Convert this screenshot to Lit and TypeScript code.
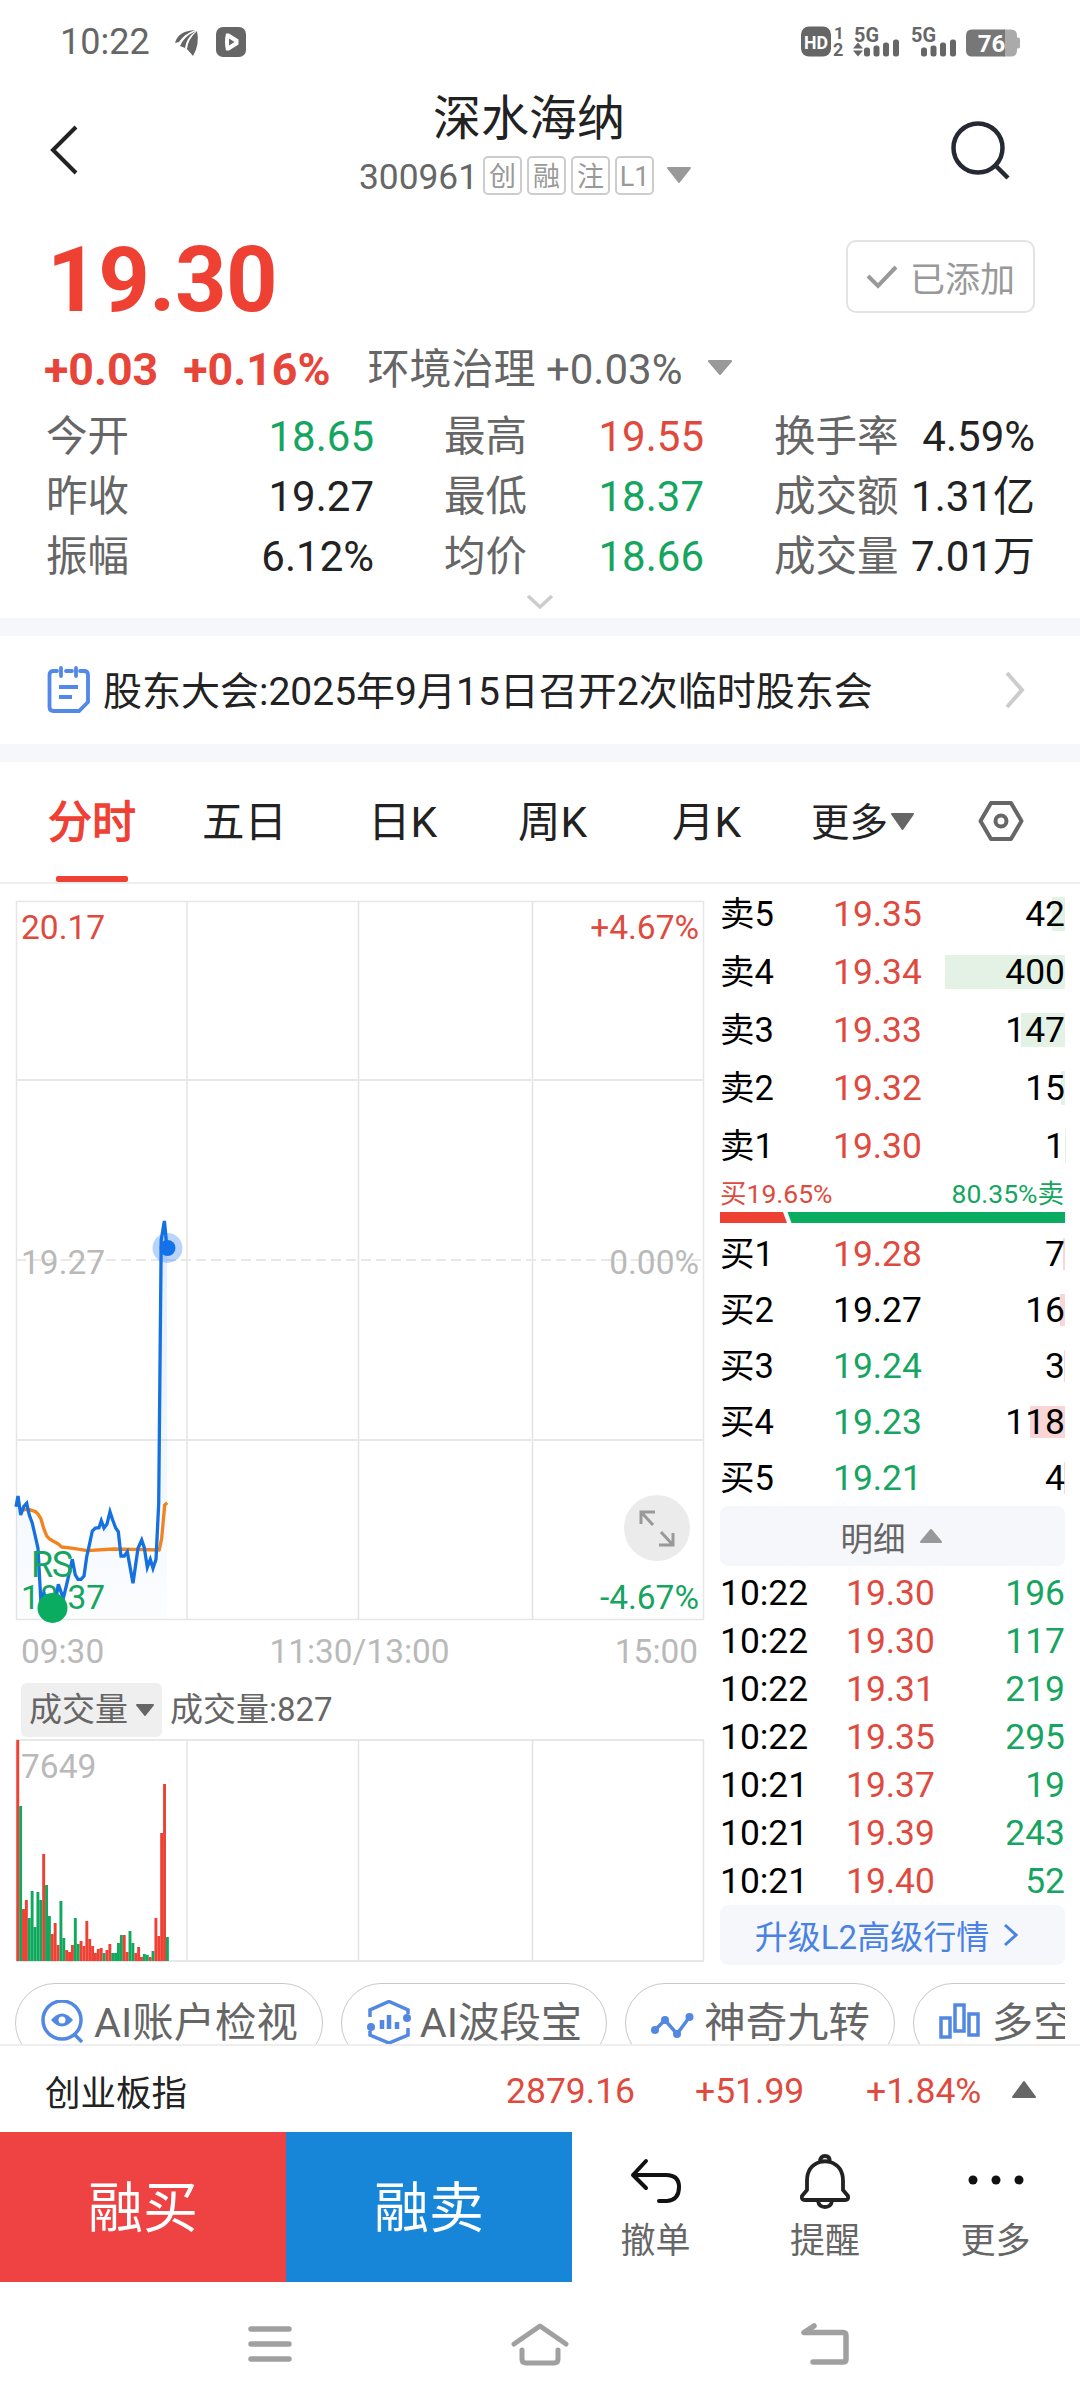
import { LitElement, html, svg, css } from "lit";
import { customElement } from "lit/decorators.js";

type Tone = "up" | "down" | "flat";

interface Stat { label: string; value: string; tone: Tone; }
interface Level { label: string; price: string; volume: number; tone: Tone; }

const STATS: Stat[] = [
  { label: "今开", value: "18.65", tone: "down" },
  { label: "最高", value: "19.55", tone: "up" },
  { label: "换手率", value: "4.59%", tone: "flat" },
  { label: "昨收", value: "19.27", tone: "flat" },
  { label: "最低", value: "18.37", tone: "down" },
  { label: "成交额", value: "1.31亿", tone: "flat" },
  { label: "振幅", value: "6.12%", tone: "flat" },
  { label: "均价", value: "18.66", tone: "down" },
  { label: "成交量", value: "7.01万", tone: "flat" },
];

const SELLS: Level[] = [
  { label: "卖5", price: "19.35", volume: 42, tone: "up" },
  { label: "卖4", price: "19.34", volume: 400, tone: "up" },
  { label: "卖3", price: "19.33", volume: 147, tone: "up" },
  { label: "卖2", price: "19.32", volume: 15, tone: "up" },
  { label: "卖1", price: "19.30", volume: 1, tone: "up" },
];

const BUYS: Level[] = [
  { label: "买1", price: "19.28", volume: 7, tone: "up" },
  { label: "买2", price: "19.27", volume: 16, tone: "flat" },
  { label: "买3", price: "19.24", volume: 3, tone: "down" },
  { label: "买4", price: "19.23", volume: 118, tone: "down" },
  { label: "买5", price: "19.21", volume: 4, tone: "down" },
];

const TRADES: [string, string, string][] = [
  ["10:22", "19.30", "196"],
  ["10:22", "19.30", "117"],
  ["10:22", "19.31", "219"],
  ["10:22", "19.35", "295"],
  ["10:21", "19.37", "19"],
  ["10:21", "19.39", "243"],
  ["10:21", "19.40", "52"],
];

// Price and average lines, in chart pixels.
const PRICE =
  "0,605.7 2,595 4.7,614 7.7,605.7 10.7,602.3 13.3,614 16.3,622.3 19,634 22,647.3 24.7,697.3 27.7,692.3 30.7,705.7 36.3,709 39.3,702 42.3,683.3 47.3,697.3 51.7,679 56.3,658.3 59.3,674 62,678.3 65,678.3 68,675 70.7,655.7 73.7,642.3 76.3,630 79.3,627 83,626.7 85.3,619.7 88,627 91,623 94,610.7 96.7,619 99.7,627 102.3,630.7 105,655 108.3,655 111.3,650.7 117,682.3 122,647.3 125.7,639 128.3,646.7 131.3,666.3 134.3,658.3 137,667.3 140,658.3 142.7,602.3 143.3,539 145.2,339 148.4,320 151,347";
const AVERAGE =
  "4.7,609 12.3,608.3 19,610.3 22,613 24.7,617.3 27.7,627.3 30.7,635 34,638.3 42.3,643 45.7,646 57.3,647.3 71.3,649.7 97.3,648 117,648.3 143.3,649 145.7,637.3 148.7,604 151.3,601.7";

// One bar a minute: height in pixels, sign gives the direction.
const VOLUMES = [
  221, -155, 52, 61, -43, -70, -34, -69, -61, 107, -76, -45, 27, 38, 16, -60, -23, 11, 9, 16, -43, -17,
  20, 15, 40, 22, 15, 8, 12, 13, -8, 11, 17, -8, -8, -18, -26, 26, 9, -30, -18, 8, 14, 4, -7, -6, 4, -10,
  43, 25, 128, 177, -24,
];

const GRID_X = [0.5, 171, 342.5, 516.5, 687.5];

@customElement("app-root")
export class AppRoot extends LitElement {
  static styles = css`
    :host { display: block; }
    * { box-sizing: border-box; }
    svg { display: block; flex: none; }
    .page {
      width: 1080px; height: 2408px; overflow: hidden; background: #fff; color: #222;
      font-family: Roboto, "Noto Sans CJK SC", sans-serif;
      display: flex; flex-direction: column; white-space: nowrap;
    }
    .page > * { flex: none; }
    .up { color: #e04a3e; }
    .down { color: #16a560; }
    .flat { color: #222; }

    .status { height: 82px; padding: 1px 50px 0 60px; display: flex; align-items: center; color: #666; font-size: 36px; }
    .status-left { display: flex; align-items: center; flex: 1; gap: 25px; }
    .status-left svg { margin-top: 1px; }

    .header { height: 143px; display: grid; grid-template-columns: 359px 340px 1fr; }
    .back { padding: 42px 0 0 49px; }
    .search { padding: 39px 0 0 249px; }
    .name { text-align: center; font-size: 48px; line-height: 60px; margin-top: 7px; }
    .code { display: flex; align-items: center; font-size: 35.3px; line-height: 38px; color: #666; margin-top: 5px; }
    .code-num { margin-right: 5px; padding-top: 4px; }
    .tag {
      width: 39px; height: 39px; border: 2px solid #ccc; border-radius: 5px; margin-right: 5px;
      font-size: 27px; line-height: 38px; text-align: center; color: #999;
    }
    .code svg { margin-left: 8px; }

    .price-row { height: 110px; padding: 0 45px 0 47px; display: flex; align-items: center; justify-content: space-between; }
    .price { font-size: 90px; font-weight: 700; line-height: 100px; padding-top: 2px; color: #ef4034; letter-spacing: -0.5px; }
    .added {
      width: 189px; height: 73px; border: 2px solid #e3e3e3; border-radius: 10px; margin-bottom: 7px;
      display: flex; align-items: center; justify-content: center; gap: 12px; font-size: 35px; color: #999;
    }
    .change-row { height: 70px; padding-left: 44px; display: flex; align-items: center; line-height: 60px; }
    .change { font-size: 44.7px; font-weight: 700; color: #e8453a; margin-right: 25px; }
    .sector { font-size: 42px; color: #666; margin-left: 12px; }
    .change-row svg { margin: 0 0 5px 26px; }

    .stats { padding: 0 45px 0 46px; display: grid; grid-template-columns: 328px 260px 261px; column-gap: 70px; grid-auto-rows: 60px; }
    .stat { display: flex; justify-content: space-between; font-size: 42px; line-height: 63px; }
    .stat-label { color: #666; font-size: 41.5px; }
    .expand { height: 33px; display: flex; align-items: center; justify-content: center; }
    .band { height: 18px; background: #f6f7fa; }

    .notice { height: 108px; padding: 0 55px 0 46px; display: flex; align-items: center; font-size: 39px; }
    .notice-text { margin: 0 auto 0 11px; line-height: 60px; padding-top: 4px; }

    .tabs {
      height: 122px; border-bottom: 2px solid #eee; padding-left: 48px; font-size: 42.5px; line-height: 122px;
      display: grid; grid-template-columns: 154px 166px 150px 154px 139px 167px 46px;
    }
    .tab.active { color: #ef4034; -webkit-text-stroke: 1.3px #ef4034; font-size: 44px; width: 88px; display: flex; flex-direction: column; align-items: center; }
    .underline { width: 72px; height: 6px; border-radius: 2px; background: #ef4034; margin-top: -8px; }
    .more { font-size: 38.5px; display: flex; gap: 3px; }
    .more svg { margin-top: 51px; }
    .gear { padding-top: 38px; }

    .market { height: 1099px; padding: 0 15px 0 16px; display: grid; grid-template-columns: 688px 345px; column-gap: 16px; }
    .chart { display: flex; flex-direction: column; padding-top: 17px; }
    .chart svg { overflow: visible; }
    .times { height: 63px; display: grid; grid-template-columns: 1fr auto 1fr; padding: 0 6px 0 5px; font-size: 33.4px; line-height: 64px; color: #b9b9b9; }
    .volume-head { height: 54px; margin-bottom: 3px; padding-left: 5px; display: flex; align-items: center; font-size: 33px; line-height: 56px; color: #666; }
    .picker { width: 141px; height: 54px; background: #efefef; border-radius: 6px; padding-left: 8px; display: flex; align-items: center; gap: 8px; margin-right: 8px; }

    .book { display: flex; flex-direction: column; color: #000; font-size: 35.4px; }
    .level { display: grid; grid-template-columns: 113px 1fr 120px; align-items: center; line-height: 60px; height: 58px; }
    .level.buy { height: 56px; line-height: 58px; }
    .level .flat { color: #000; }
    .level-label { font-size: 34.5px; }
    .volume { display: grid; align-items: center; justify-items: end; }
    .volume > * { grid-area: 1 / 1; }
    .depth { height: 34px; background: #e3f2e5; }
    .buy .depth { height: 32px; background: #fad5d5; }
    .ratio { height: 37px; font-size: 26.5px; line-height: 39px; display: flex; justify-content: space-between; padding: 0 1px 0 0; }
    .ratio-bar { margin-bottom: 2px; }
    .detail-button {
      height: 60px; background: #f6f7fa; border-radius: 8px; display: flex; align-items: center; justify-content: center;
      font-size: 32.5px; color: #666; margin: 1px 0 2px; padding-right: 3px;
    }
    .detail-button svg { margin-left: 14px; }
    .trade { height: 48px; line-height: 50px; display: grid; grid-template-columns: 126px 1fr 100px; }
    .end { text-align: right; }
    .upgrade { color: #4a82e4; font-size: 33px; margin: 1px 0 0; padding-right: 11px; }

    .chips { height: 61px; margin: 0 15px; overflow: hidden; display: flex; gap: 18px; }
    .chip {
      flex: none; height: 80px; padding: 0 24px; border: 1px solid #c8c8c8; border-radius: 40px;
      display: flex; align-items: center; gap: 9px; font-size: 41.4px; line-height: 76px; color: #666;
    }

    .index {
      height: 88px; border-top: 2px solid #eee; padding: 0 44px 0 45px; display: grid; align-items: center;
      grid-template-columns: 461px 189px 171px 131px 39px; font-size: 35.5px;
    }
    .index span { padding-top: 3px; }
    .index svg { justify-self: end; }

    .actions { height: 150px; display: grid; grid-template-columns: 286px 286px 167px 172px 169px; }
    .trade-button { color: #fff; font-size: 55px; line-height: 153px; text-align: center; height: 150px; }
    .buy-button { background: #ef4242; }
    .sell-button { background: #1886d8; }
    .tool { display: flex; flex-direction: column; align-items: center; font-size: 35px; line-height: 44px; color: #666; padding-top: 20px; gap: 24px; }
    .tool svg { height: 44px; overflow: visible; }

    .nav { height: 126px; display: grid; grid-template-columns: 270px 270px 300px; padding: 0 0 3px 135px; justify-items: center; align-items: center; }
  `;

  private triangle(w: number, h: number, color: string, flip = false) {
    const d = flip ? `M${w / 2} 1 L${w - 1} ${h - 1} H1 Z` : `M1 1 H${w - 1} L${w / 2} ${h - 1} Z`;
    return html`<svg width=${w} height=${h}><path d=${d} fill=${color} stroke=${color} stroke-width="2" stroke-linejoin="round" /></svg>`;
  }

  private statusBar() {
    return html`<div class="status">
      <div class="status-left">
        <span>10:22</span>
        <svg width="72" height="32" viewBox="175 26 72 32">
          <path d="M195 30 Q178 31 175 43 L179 42 Q184 34 195 30Z M196 31 Q184 36 180 46 L185 48 Q186 38 196 31Z M197 31 Q188 39 187 49 L193 56 Q200 44 197 31Z" fill="#666" />
          <rect x="216" y="27" width="30" height="30" rx="7" fill="#666" />
          <path d="M226 33.5 H229 L238.5 39.5 V44.5 L229 50.5 H226 Q224 42 226 33.5Z" fill="#fff" />
          <path d="M229 38.5 L234.5 42 L229 45.5Z" fill="#666" />
        </svg>
      </div>
      <svg width="240" height="60" viewBox="790 12.500 240 60" fill="#666" font-family="Roboto, sans-serif" font-weight="700">
        <rect x="801" y="27" width="30" height="30" rx="8" />
        <text x="816" y="49" font-size="19" text-anchor="middle" fill="#fff" textLength="24" lengthAdjust="spacingAndGlyphs">HD</text>
        <text x="834" y="39" font-size="17">1</text>
        <text x="833" y="56" font-size="18">2</text>
        <text x="854" y="42" font-size="21" textLength="25" lengthAdjust="spacingAndGlyphs">5G</text>
        <path d="M853 49 L858 43 L863 49Z M853 51 L858 57 L863 51Z" />
        <rect x="864" y="48" width="6" height="9" rx="2.500" /><rect x="873.500" y="46" width="6" height="11" rx="2.500" />
        <rect x="883" y="43" width="6" height="14" rx="2.500" /><rect x="893" y="40" width="6" height="17" rx="2.500" />
        <text x="911" y="42" font-size="21" textLength="25" lengthAdjust="spacingAndGlyphs">5G</text>
        <rect x="921" y="48" width="6" height="9" rx="2.500" /><rect x="930.500" y="46" width="6" height="11" rx="2.500" />
        <rect x="940" y="43" width="6" height="14" rx="2.500" /><rect x="950" y="40" width="6" height="17" rx="2.500" />
        <path d="M1004 30 H1011 Q1017 30 1017 36 V38 H1018 Q1020 38 1020 40 V47 Q1020 49 1018 49 H1017 V51 Q1017 57 1011 57 H1004Z" fill="#aaa" />
        <path d="M972 30 H1005 V57 H972 Q966 57 966 51 V36 Q966 30 972 30Z" fill="#777" />
        <text x="991.500" y="52" font-size="24" text-anchor="middle" fill="#fff">76</text>
      </svg>
    </div>`;
  }

  private header() {
    return html`<div class="header">
      <div class="back">
        <svg width="32" height="52" viewBox="0 0 32 52"><path d="M27 3 L4 26 L27 49" fill="none" stroke="#222" stroke-width="4" /></svg>
      </div>
      <div>
        <div class="name">深水海纳</div>
        <div class="code">
          <span class="code-num">300961</span>
          ${["创", "融", "注", "L1"].map((t) => html`<span class="tag">${t}</span>`)}
          ${this.triangle(24, 16, "#999")}
        </div>
      </div>
      <div class="search">
        <svg width="64" height="60" viewBox="0 0 64 60" fill="none" stroke="#252933" stroke-width="4.500">
          <circle cx="30" cy="27" r="24.500" /><path d="M48 45 L60 57" />
        </svg>
      </div>
    </div>`;
  }

  private quote() {
    return html`
      <div class="price-row">
        <span class="price">19.30</span>
        <div class="added">
          <svg width="32" height="26" viewBox="0 0 32 26"><path d="M2 12 L12 22 L30 3" fill="none" stroke="#999" stroke-width="4" /></svg>
          <span>已添加</span>
        </div>
      </div>
      <div class="change-row">
        <span class="change">+0.03</span><span class="change">+0.16%</span>
        <span class="sector">环境治理 +0.03%</span>
        ${this.triangle(24, 15, "#999")}
      </div>
      <div class="stats">
        ${STATS.map((s) => html`<div class="stat"><span class="stat-label">${s.label}</span><span class=${s.tone}>${s.value}</span></div>`)}
      </div>
      <div class="expand">
        <svg width="28" height="16" viewBox="0 0 28 16"><path d="M2 2 L14 13 L26 2" fill="none" stroke="#ccc" stroke-width="3.500" /></svg>
      </div>`;
  }

  private notice() {
    return html`<div class="notice">
      <svg width="46" height="48" viewBox="0 0 46 48" fill="none" stroke="#5288ea" stroke-width="3.800" stroke-linecap="round">
        <path d="M11 5 H7 Q3.500 5 3.500 9 V41 Q3.500 45 7.500 45 H33 L42 36 V9 Q42 5 38 5 H34 M20 5 H26" />
        <path d="M15 2 V10 M30 2 V10" />
        <path d="M13 21 H32 M13 31 H26" stroke-width="4" stroke-linecap="butt" />
      </svg>
      <span class="notice-text">股东大会:2025年9月15日召开2次临时股东会</span>
      <svg width="20" height="38" viewBox="0 0 20 38"><path d="M2 2 L17 19 L2 36" fill="none" stroke="#ccc" stroke-width="4" /></svg>
    </div>`;
  }

  private tabs() {
    return html`<div class="tabs">
      <div class="tab active"><span>分时</span><div class="underline"></div></div>
      <div class="tab">五日</div><div class="tab">日K</div><div class="tab">周K</div><div class="tab">月K</div>
      <div class="more"><span>更多</span>${this.triangle(23, 17, "#666")}</div>
      <div class="gear">
        <svg width="46" height="42" viewBox="0 0 46 42" fill="none" stroke="#666" stroke-width="4">
          <path d="M13 3 H33 L43.500 21 L33 39 H13 L2.500 21 Z" stroke-linejoin="round" /><circle cx="23" cy="21" r="5.500" />
        </svg>
      </div>
    </div>`;
  }

  private priceChart() {
    return html`<svg width="688" height="719" font-family="Roboto, sans-serif" font-size="33.500">
      <defs>
        <linearGradient id="fill" x1="0" y1="0" x2="0" y2="1">
          <stop offset="0" stop-color="#1571e0" stop-opacity="0.12" /><stop offset="1" stop-color="#1571e0" stop-opacity="0.015" />
        </linearGradient>
      </defs>
      <rect x="0.500" y="0.500" width="687" height="718" fill="none" stroke="#e6e6e6" stroke-width="1.500" />
      ${GRID_X.slice(1, 4).map((x) => svg`<line x1=${x} x2=${x} y1="0" y2="718" stroke="#e3e3e3" stroke-width="1.500" />`)}
      <path d="M0 179 H688 M0 539 H688" stroke="#e8e8e8" stroke-width="2" />
      <path d="M0 359 H688" stroke="#e8e8e8" stroke-width="2" stroke-dasharray="10 5" />
      <polygon points="0,718 ${PRICE} 151,718" fill="url(#fill)" />
      <text x="5" y="37.500" fill="#e04a3e">20.17</text>
      <text x="683" y="37.500" text-anchor="end" fill="#e04a3e">+4.67%</text>
      <text x="5" y="372.500" fill="#b9b9b9">19.27</text>
      <text x="683" y="372.500" text-anchor="end" fill="#b9b9b9">0.00%</text>
      <text x="5" y="707.500" fill="#16a560">18.37</text>
      <text x="683" y="707.500" text-anchor="end" fill="#16a560">-4.67%</text>
      <polyline points=${AVERAGE} fill="none" stroke="#ef8420" stroke-width="3.300" stroke-linejoin="round" />
      <polyline points=${PRICE} fill="none" stroke="#1571e0" stroke-width="3.300" />
      <circle cx="151.500" cy="347" r="15" fill="#1571f0" fill-opacity="0.300" />
      <circle cx="151.500" cy="347" r="8" fill="#1571ea" />
      <text x="15" y="676" font-size="36" textLength="42" fill="#16a560">RS</text>
      <circle cx="36.500" cy="707" r="15" fill="#0aad5f" />
      <circle cx="641" cy="627" r="33" fill="#ebebeb" />
      <path d="M625 623 V611 H639 M626 612 L637 624 M657 632 V644 H643 M656 643 L645 631" fill="none" stroke="#999" stroke-width="3" />
    </svg>`;
  }

  private volumeChart() {
    const step = 2.878;
    return html`<svg width="688" height="222" font-family="Roboto, sans-serif" font-size="33.500">
      <path d="M0 0 H688 M0 221 H688" stroke="#e8e8e8" stroke-width="2" />
      ${GRID_X.map((x) => svg`<line x1=${x} x2=${x} y1="0" y2="220" stroke="#e3e3e3" stroke-width="1.500" />`)}
      ${VOLUMES.map((v, i) => svg`<rect x=${0.3 + i * step} y=${221 - Math.abs(v)} width="2.900" height=${Math.abs(v)} fill=${v > 0 ? "#ef4034" : "#0fa95e"} />`)}
      <text x="5" y="38" fill="#b9b9b9">7649</text>
    </svg>`;
  }

  private level(l: Level, side: string) {
    return html`<div class="level ${side}">
      <span class="level-label">${l.label}</span>
      <span class=${l.tone}>${l.price}</span>
      <div class="volume"><div class="depth" style="width:${l.volume * 0.3}px"></div><span>${l.volume}</span></div>
    </div>`;
  }

  private book() {
    return html`<div class="book">
      ${SELLS.map((l) => this.level(l, "sell"))}
      <div class="ratio"><span class="up">买19.65%</span><span class="down">80.35%卖</span></div>
      <svg class="ratio-bar" width="345" height="12">
        <path d="M0 1 H63 L67 12 H0Z" fill="#ef4034" /><path d="M67.500 1 H345 V12 H71.500Z" fill="#0aad5f" />
      </svg>
      ${BUYS.map((l) => this.level(l, "buy"))}
      <div class="detail-button"><span>明细</span>${this.triangle(22, 14, "#999", true)}</div>
      ${TRADES.map(([t, p, v]) => html`<div class="trade"><span>${t}</span><span class="up">${p}</span><span class="down end">${v}</span></div>`)}
      <div class="detail-button upgrade"><span>升级L2高级行情</span>
        <svg width="16" height="24" viewBox="0 0 16 24"><path d="M2 2 L13 12 L2 22" fill="none" stroke="#4a82e4" stroke-width="3" /></svg>
      </div>
    </div>`;
  }

  private chips() {
    const blue = "#5288e2";
    const icons = [
      svg`<circle cx="22" cy="20" r="19" /><path d="M35 35 L42 42" /><path d="M11 20 Q22 7 33 20 Q22 33 11 20Z" fill=${blue} stroke="none" /><circle cx="22" cy="20" r="3.500" fill="#fff" stroke="none" />`,
      svg`<path d="M4 17 V10 L23 1.500 L42 10 V14 M42 28 V35 L23 43 L4 35 V31" /><circle cx="41" cy="18" r="4" fill=${blue} stroke="none" /><circle cx="5" cy="27" r="4" fill=${blue} stroke="none" /><path d="M16 20 V29 M23 15 V29 M31 22 V29" stroke-width="4.500" />`,
      svg`<path d="M5 30 L15 20 L27 34 L39.500 17" /><g fill=${blue} stroke="none"><circle cx="5" cy="30" r="4" /><circle cx="15" cy="20" r="4" /><circle cx="27" cy="34" r="4" /><circle cx="39.500" cy="17" r="4" /></g>`,
      svg`<rect x="3" y="18" width="9" height="19" /><rect x="17" y="5" width="9" height="26" /><rect x="31" y="14" width="9" height="21" />`,
    ];
    return html`<div class="chips">
      ${["AI账户检视", "AI波段宝", "神奇九转", "多空博弈"].map((name, i) => html`<div class="chip">
        <svg width="45" height="46" viewBox="0 0 45 46" fill="none" stroke=${blue} stroke-width="3.500">${icons[i]}</svg><span>${name}</span>
      </div>`)}
    </div>`;
  }

  render() {
    return html`<div class="page">
      ${this.statusBar()} ${this.header()} ${this.quote()}
      <div class="band"></div>
      ${this.notice()}
      <div class="band"></div>
      ${this.tabs()}
      <div class="market">
        <div class="chart">
          ${this.priceChart()}
          <div class="times"><span>09:30</span><span>11:30/13:00</span><span class="end">15:00</span></div>
          <div class="volume-head">
            <div class="picker"><span>成交量</span>${this.triangle(18, 12, "#666")}</div>
            <span>成交量:827</span>
          </div>
          ${this.volumeChart()}
        </div>
        ${this.book()}
      </div>
      ${this.chips()}
      <div class="index">
        <span>创业板指</span><span class="up">2879.16</span><span class="up">+51.99</span>
        <span class="up">+1.84%</span>${this.triangle(24, 17, "#666", true)}
      </div>
      <div class="actions">
        <div class="trade-button buy-button">融买</div>
        <div class="trade-button sell-button">融卖</div>
        <div class="tool">
          <svg width="54" height="44" viewBox="0 0 54 44" fill="none" stroke="#111" stroke-width="4" stroke-linecap="round" stroke-linejoin="round">
            <path d="M17 9 L4 23 L17 36 M4 23 H37 Q50 23 50 35 Q50 48 38 49 H30" />
          </svg>
          <span>撤单</span>
        </div>
        <div class="tool">
          <svg width="52" height="44" viewBox="0 0 52 44" fill="none" stroke="#222" stroke-width="3.800" stroke-linejoin="round">
            <path d="M21 10 Q21 4 26 4 Q31 4 31 10 Q44 14 44 29 V38 L49 44 Q50 48 46 48 H6 Q2 48 3 44 L8 38 V29 Q8 14 21 10 Q26 8.500 31 10 M19 49 Q20 55 26 55 Q32 55 33 49" />
          </svg>
          <span>提醒</span>
        </div>
        <div class="tool">
          <svg width="58" height="44" viewBox="0 0 58 44" fill="#111"><circle cx="6" cy="28" r="4.500" /><circle cx="29" cy="28" r="4.500" /><circle cx="52" cy="28" r="4.500" /></svg>
          <span>更多</span>
        </div>
      </div>
      <div class="nav">
        <svg width="46" height="38" viewBox="0 0 46 38" stroke="#a0a0a0" stroke-width="5.500" stroke-linecap="round"><path d="M4 4 H42 M4 19 H42 M4 34 H42" /></svg>
        <svg width="58" height="44" viewBox="0 0 58 44" fill="none" stroke="#a0a0a0" stroke-width="5" stroke-linecap="round" stroke-linejoin="round">
          <path d="M3 22 L29 4 L55 22 M11 28 V37 Q11 41 15 41 H43 Q47 41 47 37 V28" />
        </svg>
        <svg width="50" height="44" viewBox="0 0 50 44" fill="none" stroke="#a0a0a0" stroke-width="5.500" stroke-linecap="round" stroke-linejoin="round">
          <path d="M14 4 L4 10.500 H43 Q46 10.500 46 14 V37 Q46 40 43 40 H13" />
        </svg>
      </div>
    </div>`;
  }
}
